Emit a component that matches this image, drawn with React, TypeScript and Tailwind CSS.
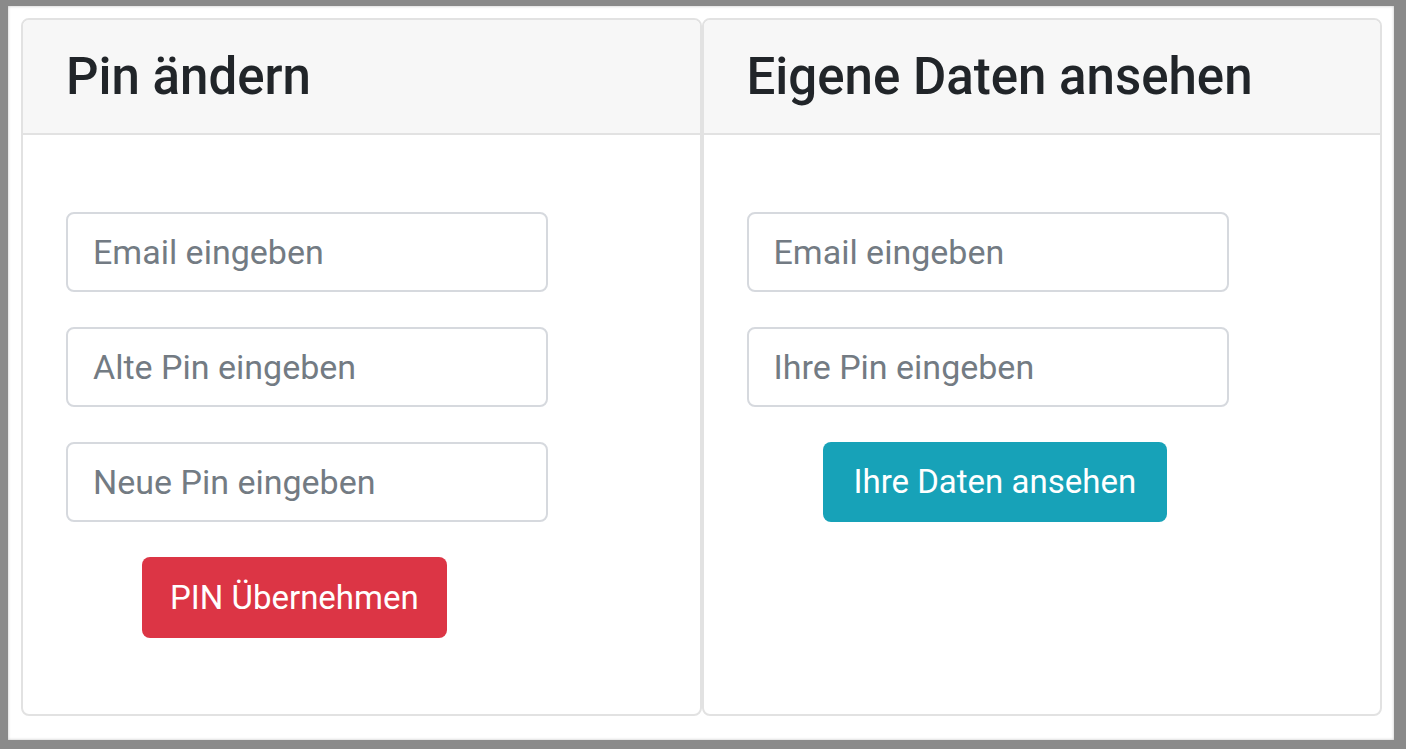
import React from "react";

const font = { fontFamily: "Roboto, 'Liberation Sans', sans-serif" };

function Field({ placeholder }: { placeholder: string }) {
  return (
    <input
      type="text"
      placeholder={placeholder}
      className="w-[482px] h-[80px] rounded-[8px] border-2 border-[#d6d9de] bg-white px-[25px] text-[34px] text-[#495057] placeholder:text-[#737b83] outline-none"
    />
  );
}

function Card({ title, children }: { title: string; children: React.ReactNode }) {
  return (
    <div className="flex-1 flex flex-col rounded-[8px] border-2 border-[#e2e2e2] bg-white overflow-hidden">
      <div className="h-[115px] flex items-center px-[43px] bg-[#f7f7f7] border-b-2 border-[#e2e2e2]">
        <h3 className="text-[51px] font-medium text-[#212529] leading-none">{title}</h3>
      </div>
      <div className="flex flex-col gap-[35px] px-[43px] pt-[77px]">{children}</div>
    </div>
  );
}

export default function App() {
  return (
    <div className="w-[1406px] h-[749px] bg-[#8a8a8a] pt-[6px] pl-[8px]" style={font}>
      <div className="w-[1386px] h-[734px] bg-white flex pl-[13px] pr-[12px] pt-[12px] pb-[24px] shadow-[inset_0_0_3px_rgba(0,0,0,0.25)]">
        <Card title="Pin ändern">
          <Field placeholder="Email eingeben" />
          <Field placeholder="Alte Pin eingeben" />
          <Field placeholder="Neue Pin eingeben" />
          <div>
            <button className="ml-[76px] h-[81px] px-[28px] rounded-[8px] bg-[#dc3545] text-white text-[33px]">
              PIN Übernehmen
            </button>
          </div>
        </Card>
        <Card title="Eigene Daten ansehen">
          <Field placeholder="Email eingeben" />
          <Field placeholder="Ihre Pin eingeben" />
          <div>
            <button className="ml-[76px] h-[80px] px-[31px] rounded-[8px] bg-[#17a2b8] text-white text-[33px]">
              Ihre Daten ansehen
            </button>
          </div>
        </Card>
      </div>
    </div>
  );
}
